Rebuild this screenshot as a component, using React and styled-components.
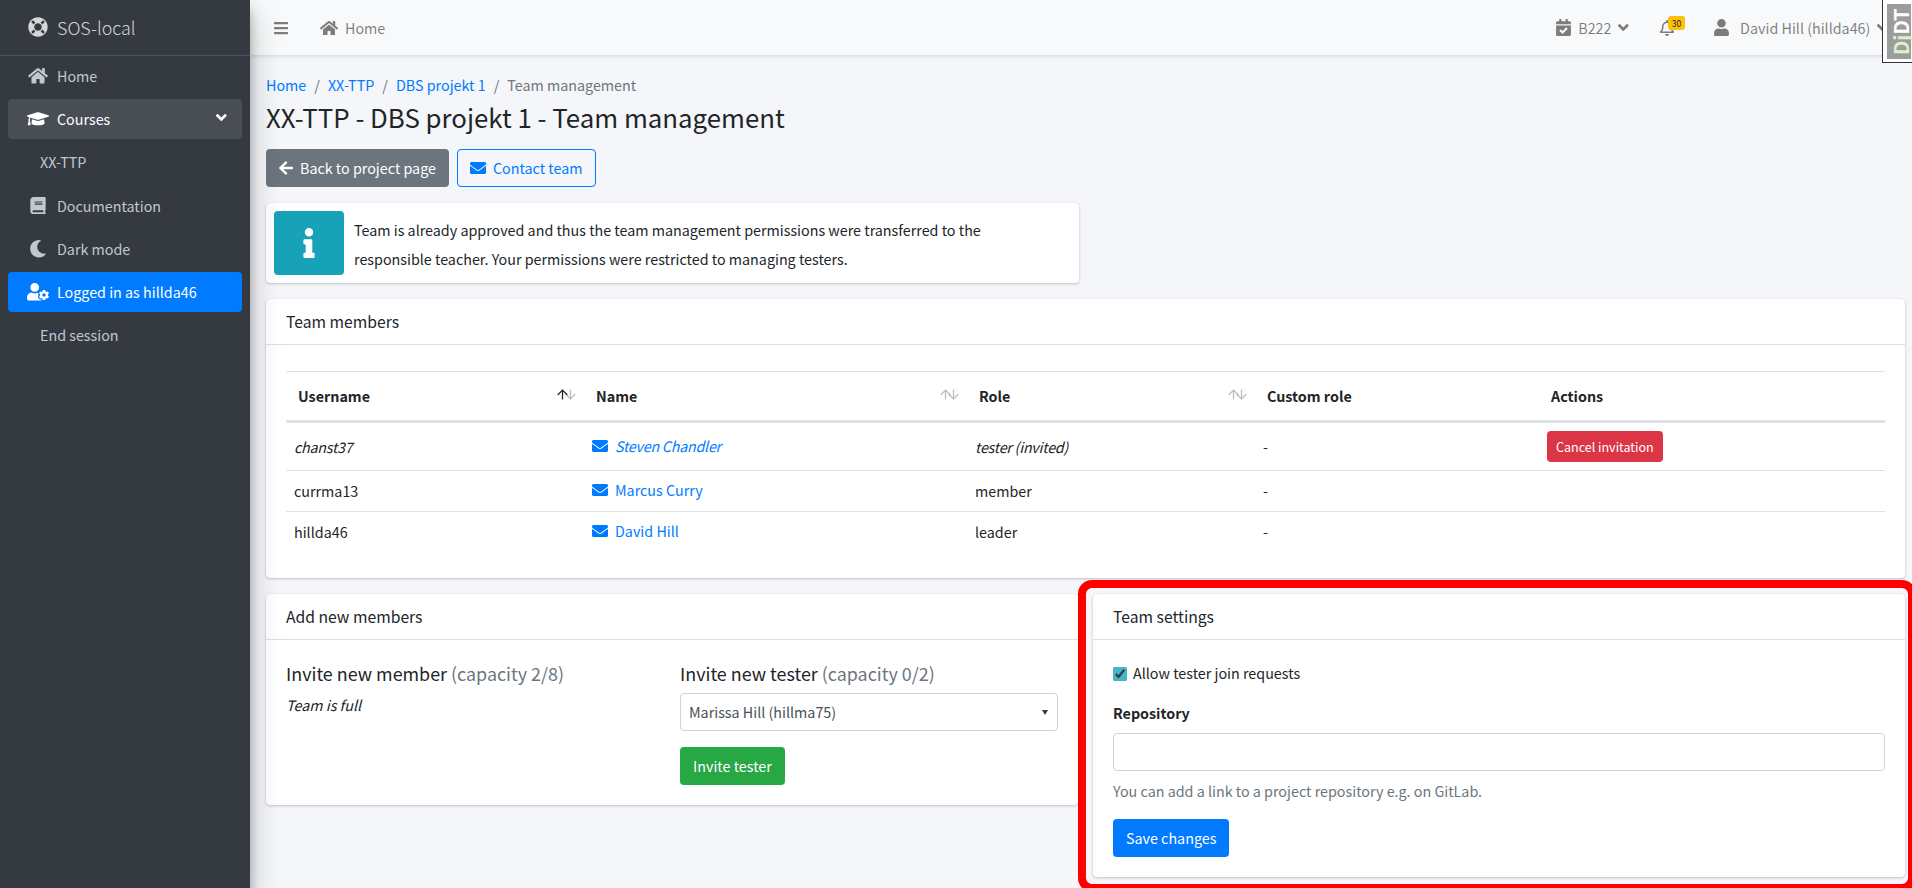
import React from 'react';
import styled, { createGlobalStyle } from 'styled-components';
import { ArrowDown, ArrowUp } from 'lucide-react';
import {
  FaAngleDown,
  FaArrowLeft,
  FaBars,
  FaBook,
  FaCalendarCheck,
  FaEnvelope,
  FaGraduationCap,
  FaHome,
  FaInfo,
  FaLifeRing,
  FaMoon,
  FaRegBell,
  FaUser,
  FaUserCog,
} from 'react-icons/fa';

const colors = {
  sidebar: '#343a40',
  sidebarText: '#c2c7d0',
  page: '#f4f6f9',
  text: '#212529',
  muted: '#6c757d',
  link: '#007bff',
  border: 'rgba(0, 0, 0, 0.125)',
  line: '#dee2e6',
};

const GlobalStyle = createGlobalStyle`
  html, body {
    margin: 0;
    height: 888px;
    overflow: hidden;
    background: ${colors.page};
  }
  body {
    font-family: "Noto Sans CJK SC", "Noto Sans", "Liberation Sans", sans-serif;
    font-size: 14.32px;
    line-height: 24px;
    color: ${colors.text};
  }
  * {
    box-sizing: border-box;
  }
  svg {
    flex: none;
  }
`;

const Layout = styled.div`
  display: flex;
  height: 888px;
  overflow: hidden;
`;

const Sidebar = styled.aside`
  flex: 0 0 250px;
  background: ${colors.sidebar};
  box-shadow: 0 14px 28px rgba(0, 0, 0, 0.25), 0 10px 10px rgba(0, 0, 0, 0.22);
  z-index: 2;
`;

const Brand = styled.div`
  display: flex;
  align-items: center;
  height: 56px;
  padding: 0 0 2px 28px;
  border-bottom: 1px solid #4b545c;
  font-size: 17.9px;
  font-weight: 300;
  color: rgba(255, 255, 255, 0.8);

  svg {
    font-size: 20px;
    margin-right: 9px;
  }
`;

const SideNav = styled.nav`
  display: flex;
  flex-direction: column;
  gap: 3.2px;
  padding: 0 8px;
`;

const SideLink = styled.a`
  display: flex;
  align-items: center;
  height: 40px;
  padding: 0 16px;
  padding-left: ${(p) => (p.$sub ? '32px' : '16px')};
  border-radius: 4px;
  color: ${(p) => (p.$active || p.$open ? '#fff' : colors.sidebarText)};
  background: ${(p) =>
    p.$active ? colors.link : p.$open ? 'rgba(255, 255, 255, 0.1)' : 'transparent'};
`;

const SideIcon = styled.span`
  display: flex;
  justify-content: center;
  flex: 0 0 25.6px;
  margin: 0 6.6px 0 0.8px;

  svg {
    width: 22px;
    height: 17.5px;
  }
`;

const Caret = styled(FaAngleDown)`
  width: 10.6px;
  height: 17px;
`;

const SideCaret = styled.span`
  display: flex;
  margin-left: auto;
  margin-top: -3px;
  margin-right: -1px;
`;

const Main = styled.div`
  flex: 1;
  min-width: 0;
  position: relative;
`;

const Navbar = styled.header`
  display: flex;
  align-items: center;
  height: 55px;
  padding: 0 24px;
  background: #f8f9fa;
  box-shadow: 0 1px 4px rgba(0, 0, 0, 0.14);
  color: rgba(0, 0, 0, 0.5);
`;

const NavLink = styled.a`
  display: flex;
  align-items: center;
  gap: 7px;
  margin-left: ${(p) => p.$left || 0}px;
  color: rgba(0, 0, 0, 0.5);
  position: relative;
`;

const NavRight = styled.div`
  display: flex;
  align-items: center;
  margin-left: auto;
`;

const BarsIcon = styled(FaBars)`
  width: 14px;
  height: 16px;
`;

const NavHomeIcon = styled(FaHome)`
  width: 18px;
  height: 16px;
`;

const CalendarIcon = styled(FaCalendarCheck)`
  width: 15px;
  height: 17px;
`;

const BellIcon = styled(FaRegBell)`
  width: 14px;
  height: 16px;
`;

const UserIcon = styled(FaUser)`
  width: 15px;
  height: 17px;
  margin-right: 4px;
`;

const BackIcon = styled(FaArrowLeft)`
  width: 14px;
  height: 16px;
`;

const MailIcon = styled(FaEnvelope)`
  width: 16px;
  height: 16px;
`;

const Badge = styled.span`
  position: absolute;
  top: -4px;
  left: 8px;
  width: 17px;
  height: 14px;
  border-radius: 3px;
  background: #ffc107;
  color: ${colors.text};
  font-size: 8.5px;
  line-height: 14px;
  text-align: center;
`;

const DebugHandle = styled.div`
  position: absolute;
  top: 0;
  right: 0;
  width: 30px;
  height: 63px;
  padding: 4px 0 3px 4px;
  background: #fff;
  border-left: 1px solid #333;
  border-bottom: 1px solid #333;
  z-index: 3;
`;

const DebugLabel = styled.div`
  display: flex;
  align-items: center;
  justify-content: center;
  height: 100%;
  padding-right: 4px;
  background: #9c9c9c;
  color: #fff;
  font-size: 20px;
  font-weight: 700;
  line-height: 1;
  writing-mode: vertical-rl;
  transform: rotate(180deg);

  span {
    color: #dbf1c8;
  }
`;

const Content = styled.main`
  padding: 18px 7px 0 16px;
`;

const Breadcrumb = styled.ol`
  display: flex;
  margin: 0 0 2px;
  padding: 0;
  list-style: none;
`;

const Crumb = styled.li`
  color: ${colors.muted};

  & + &::before {
    content: '/';
    padding: 0 8px;
    color: ${colors.muted};
  }

  a {
    color: ${colors.link};
  }
`;

const Title = styled.h1`
  margin: 0 0 15px;
  font-size: 25.8px;
  font-weight: 400;
  line-height: 35px;
`;

const Toolbar = styled.div`
  display: flex;
  gap: 8px;
  margin-bottom: 16px;
`;

const Button = styled.button`
  display: inline-flex;
  align-items: center;
  gap: 7px;
  height: ${(p) => (p.$small ? 31 : 38)}px;
  padding: 0 ${(p) => (p.$small ? 8 : 12)}px;
  border: 1px solid ${(p) => (p.$outline ? p.$color : 'transparent')};
  border-radius: 4px;
  background: ${(p) => (p.$outline ? 'transparent' : p.$color)};
  color: ${(p) => (p.$outline ? p.$color : '#fff')};
  font: inherit;
  font-size: ${(p) => (p.$small ? 12.53 : 14.32)}px;
  white-space: nowrap;
`;

const InfoBox = styled.div`
  display: flex;
  width: 813px;
  min-height: 80px;
  padding: 8px;
  margin-bottom: 16px;
  border-radius: 4px;
  background: #fff;
  box-shadow: 0 0 1px rgba(0, 0, 0, 0.125), 0 1px 3px rgba(0, 0, 0, 0.2);
`;

const InfoIcon = styled.span`
  display: flex;
  align-items: center;
  justify-content: center;
  flex: 0 0 70px;
  border-radius: 4px;
  background: #17a2b8;
  color: #fff;
  font-size: 30px;
`;

const InfoText = styled.div`
  padding: 4px 22px 0 10px;
  line-height: 29px;
`;

const Card = styled.section`
  border-radius: 4px;
  background: #fff;
  box-shadow: 0 0 1px rgba(0, 0, 0, 0.125), 0 1px 3px rgba(0, 0, 0, 0.2);
  margin-bottom: ${(p) => p.$gap || 0}px;
`;

const CardHeader = styled.div`
  height: 46px;
  padding: 11px 20px;
  border-bottom: 1px solid ${colors.border};
  font-size: 15.7px;
`;

const CardBody = styled.div`
  padding: 20px;
`;

const Table = styled.table`
  width: 100%;
  margin: 6px 0;
  table-layout: fixed;
  border-collapse: separate;
  border-spacing: 0;
`;

const HeadCell = styled.th`
  position: relative;
  height: 52px;
  padding: 0 12px;
  border-top: 1px solid ${colors.line};
  border-bottom: 3px solid ${colors.line};
  font-weight: 700;
  text-align: left;
`;

const SortIcons = styled.span`
  position: absolute;
  top: 15px;
  right: 6px;
  display: flex;

  svg + svg {
    margin-left: -6.5px;
  }
`;

const Cell = styled.td`
  height: ${(p) => (p.$first ? 47 : 41)}px;
  padding: 0 8px;
  border-top: ${(p) => (p.$first ? 0 : 1)}px solid ${colors.line};
  font-style: ${(p) => (p.$invited ? 'italic' : 'normal')};
  letter-spacing: ${(p) => (p.$invited ? '-0.25px' : 'normal')};
`;

const MailLink = styled.a`
  display: inline-flex;
  align-items: center;
  gap: 7px;
  color: ${colors.link};
`;

const Columns = styled.div`
  display: grid;
  grid-template-columns: 1fr 1fr;
  column-gap: 15px;
  align-items: start;
`;

const InviteGrid = styled.div`
  display: grid;
  grid-template-columns: 1fr 1fr;
  column-gap: 16px;
  padding-top: 1px;
`;

const InviteTitle = styled.h5`
  margin: 0 0 8px;
  font-size: 17.9px;
  font-weight: 400;
  line-height: 24px;

  small {
    font-size: inherit;
    color: ${colors.muted};
  }
`;

const Note = styled.em`
  display: block;
  margin-top: 7px;
`;

const SelectWrap = styled.div`
  position: relative;
  margin-bottom: 16px;

  &::after {
    content: '';
    position: absolute;
    top: 17px;
    right: 10px;
    border-left: 3.5px solid transparent;
    border-right: 3.5px solid transparent;
    border-top: 5px solid #343a40;
    pointer-events: none;
  }
`;

const Select = styled.select`
  display: block;
  width: 100%;
  height: 38px;
  padding: 0 8px;
  border: 1px solid #ced4da;
  border-radius: 4px;
  background: #fff;
  color: #495057;
  font: inherit;
  appearance: none;
`;

const SettingsColumn = styled.div`
  position: relative;
`;

const Highlight = styled.div`
  position: absolute;
  top: -14px;
  left: -15px;
  right: -11px;
  bottom: -15px;
  border: 8px solid #f00;
  border-radius: 14px;
  pointer-events: none;
`;

const CheckRow = styled.label`
  display: flex;
  align-items: center;
  gap: 6px;
  height: 24px;
  margin: 1px 0 16px;
`;

const Check = styled.input`
  width: 14px;
  height: 14px;
  margin: 1px 0 0;
  accent-color: #46b5c6;
`;

const FieldLabel = styled.label`
  display: block;
  margin-bottom: 8px;
  font-weight: 700;
`;

const TextInput = styled.input`
  display: block;
  width: 100%;
  height: 38px;
  border: 1px solid #ced4da;
  border-radius: 4px;
  background: #fff;
`;

const HelpText = styled.div`
  margin: 8px 0 16px;
  color: ${colors.muted};
`;

const sideItems = [
  { label: 'Home', icon: <FaHome /> },
  { label: 'Courses', icon: <FaGraduationCap />, open: true },
  { label: 'XX-TTP', sub: true },
  { label: 'Documentation', icon: <FaBook /> },
  { label: 'Dark mode', icon: <FaMoon /> },
  { label: 'Logged in as hillda46', icon: <FaUserCog />, active: true },
  { label: 'End session', sub: true },
];

const columns = [
  { label: 'Username', width: 298, sort: 'up' },
  { label: 'Name', width: 383, sort: 'none' },
  { label: 'Role', width: 288, sort: 'none' },
  { label: 'Custom role', width: 284 },
  { label: 'Actions', width: 346 },
];

const members = [
  { username: 'chanst37', name: 'Steven Chandler', role: 'tester (invited)', invited: true },
  { username: 'currma13', name: 'Marcus Curry', role: 'member' },
  { username: 'hillda46', name: 'David Hill', role: 'leader' },
];

function App() {
  return (
    <Layout>
      <GlobalStyle />
      <Sidebar>
        <Brand>
          <FaLifeRing />
          SOS-local
        </Brand>
        <SideNav>
          {sideItems.map((item) => (
            <SideLink key={item.label} $sub={item.sub} $open={item.open} $active={item.active}>
              {item.icon && <SideIcon>{item.icon}</SideIcon>}
              {item.label}
              {item.open && (
                <SideCaret>
                  <Caret />
                </SideCaret>
              )}
            </SideLink>
          ))}
        </SideNav>
      </Sidebar>
      <Main>
        <Navbar>
          <NavLink>
            <BarsIcon />
          </NavLink>
          <NavLink $left={32}>
            <NavHomeIcon />
            Home
          </NavLink>
          <NavRight>
            <NavLink>
              <CalendarIcon />
              B222
              <Caret />
            </NavLink>
            <NavLink $left={31}>
              <BellIcon />
              <Badge>30</Badge>
            </NavLink>
            <NavLink $left={40}>
              <UserIcon />
              David Hill (hillda46)
              <Caret />
            </NavLink>
          </NavRight>
        </Navbar>
        <DebugHandle>
          <DebugLabel>
            <div>
              <span>Dj</span>DT
            </div>
          </DebugLabel>
        </DebugHandle>
        <Content>
          <Breadcrumb>
            <Crumb>
              <a>Home</a>
            </Crumb>
            <Crumb>
              <a>XX-TTP</a>
            </Crumb>
            <Crumb>
              <a>DBS projekt 1</a>
            </Crumb>
            <Crumb>Team management</Crumb>
          </Breadcrumb>
          <Title>XX-TTP - DBS projekt 1 - Team management</Title>
          <Toolbar>
            <Button $color={colors.muted}>
              <BackIcon />
              Back to project page
            </Button>
            <Button $outline $color={colors.link}>
              <MailIcon />
              Contact team
            </Button>
          </Toolbar>
          <InfoBox>
            <InfoIcon>
              <FaInfo />
            </InfoIcon>
            <InfoText>
              Team is already approved and thus the team management permissions were transferred to
              the responsible teacher. Your permissions were restricted to managing testers.
            </InfoText>
          </InfoBox>
          <Card $gap={16}>
            <CardHeader>Team members</CardHeader>
            <CardBody>
              <Table>
                <colgroup>
                  {columns.map((col) => (
                    <col key={col.label} width={col.width} />
                  ))}
                </colgroup>
                <thead>
                  <tr>
                    {columns.map((col) => (
                      <HeadCell key={col.label}>
                        {col.label}
                        {col.sort && (
                          <SortIcons>
                            <ArrowUp size={15} opacity={col.sort === 'up' ? 1 : 0.3} />
                            <ArrowDown size={15} opacity={0.3} />
                          </SortIcons>
                        )}
                      </HeadCell>
                    ))}
                  </tr>
                </thead>
                <tbody>
                  {members.map((member, i) => (
                    <tr key={member.username}>
                      <Cell $first={i === 0} $invited={member.invited}>
                        {member.username}
                      </Cell>
                      <Cell $first={i === 0} $invited={member.invited}>
                        <MailLink>
                          <MailIcon />
                          {member.name}
                        </MailLink>
                      </Cell>
                      <Cell $first={i === 0} $invited={member.invited}>
                        {member.role}
                      </Cell>
                      <Cell $first={i === 0}>-</Cell>
                      <Cell $first={i === 0}>
                        {member.invited && (
                          <Button $small $color="#dc3545">
                            Cancel invitation
                          </Button>
                        )}
                      </Cell>
                    </tr>
                  ))}
                </tbody>
              </Table>
            </CardBody>
          </Card>
          <Columns>
            <Card>
              <CardHeader>Add new members</CardHeader>
              <CardBody>
                <InviteGrid>
                  <div>
                    <InviteTitle>
                      Invite new member <small>(capacity 2/8)</small>
                    </InviteTitle>
                    <Note>Team is full</Note>
                  </div>
                  <div>
                    <InviteTitle>
                      Invite new tester <small>(capacity 0/2)</small>
                    </InviteTitle>
                    <SelectWrap>
                      <Select defaultValue="hillma75">
                        <option value="hillma75">Marissa Hill (hillma75)</option>
                      </Select>
                    </SelectWrap>
                    <Button $color="#28a745">Invite tester</Button>
                  </div>
                </InviteGrid>
              </CardBody>
            </Card>
            <SettingsColumn>
              <Card>
                <CardHeader>Team settings</CardHeader>
                <CardBody>
                  <CheckRow>
                    <Check type="checkbox" defaultChecked />
                    Allow tester join requests
                  </CheckRow>
                  <FieldLabel>Repository</FieldLabel>
                  <TextInput type="text" />
                  <HelpText>You can add a link to a project repository e.g. on GitLab.</HelpText>
                  <Button $color={colors.link}>Save changes</Button>
                </CardBody>
              </Card>
              <Highlight />
            </SettingsColumn>
          </Columns>
        </Content>
      </Main>
    </Layout>
  );
}

export default App;
